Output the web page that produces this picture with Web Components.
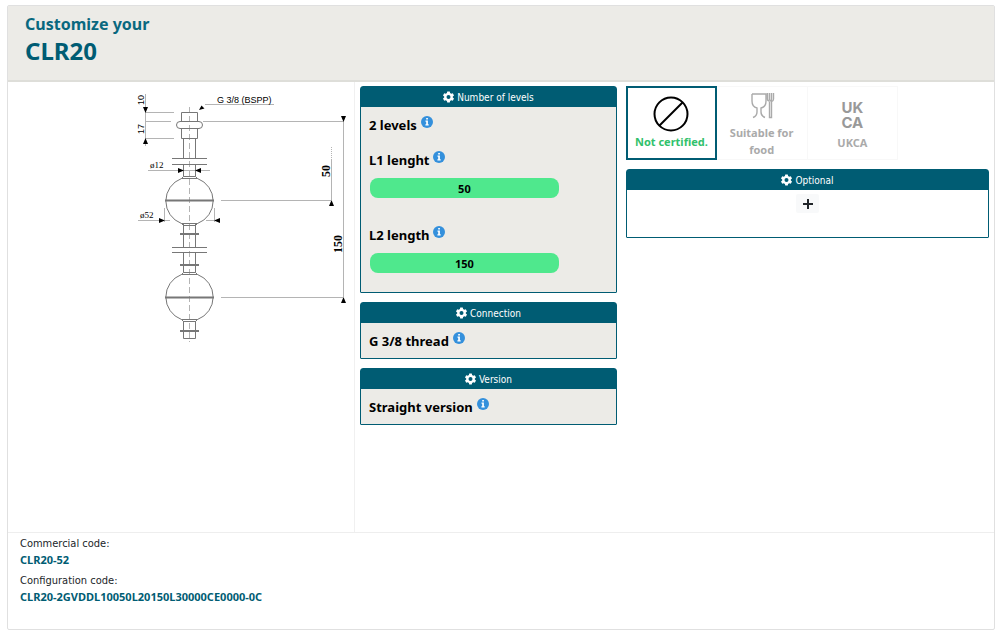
<!DOCTYPE html>
<html lang="en">
<head>
<meta charset="utf-8">
<title>Customize your CLR20</title>
<style>
  :root { --teal: #005c73; --panel: #ecebe7; --line: #e0e0e0; --strong: "Noto Sans", "Open Sans", sans-serif; }
  body { margin: 0; padding: 5px 5px 5px 7px; background: #fff; color: #212529; font-family: "DejaVu Sans Condensed", "Noto Sans", sans-serif; font-size: 11px; }
</style>
</head>
<body>
<product-configurator>
  <product-header slot="header" name="CLR20">Customize your</product-header>
  <float-drawing slot="drawing"></float-drawing>
  <option-panel slot="options" heading="Number of levels">
    <option-row label="2 levels"></option-row>
    <option-row label="L1 lenght" value="50"></option-row>
    <option-row label="L2 length" value="150"></option-row>
  </option-panel>
  <option-panel slot="options" heading="Connection"><option-row label="G 3/8 thread"></option-row></option-panel>
  <option-panel slot="options" heading="Version"><option-row label="Straight version"></option-row></option-panel>
  <cert-picker slot="extras">
    <cert-choice selected label="Not certified.">
      <svg width="36" height="36" viewBox="0 0 36 36" fill="none" stroke="#000" stroke-width="2" aria-hidden="true"><circle cx="18" cy="18" r="16.5"/><path d="M6.5 29.5 29.5 6.5"/></svg>
    </cert-choice>
    <cert-choice label="Suitable for food">
      <svg width="26" height="28" viewBox="0 0 26 28" fill="none" stroke="#aaa" stroke-width="1.4" aria-hidden="true"><path d="M3 2h14v7q0 6-5 7v4q0 4 4 5.500M3 2v7q0 6 5 7v4q0 4-4 5.500M18.500 1v6q0 2 2 2t2-2V1M20.500 1v7M24.500 1v6q0 2-2 2.500v16h-2V10"/></svg>
    </cert-choice>
    <cert-choice label="UKCA">
      <span class="mark" aria-hidden="true"><span>UK</span><span>CA</span></span>
    </cert-choice>
  </cert-picker>
  <option-panel slot="extras" heading="Optional" plain><add-option></add-option></option-panel>
  <code-summary slot="footer" commercial="CLR20-52" configuration="CLR20-2GVDDL10050L20150L30000CE0000-0C"></code-summary>
</product-configurator>

<script>
class BaseElement extends HTMLElement {
  connectedCallback() {
    if (this.shadowRoot) return;
    this.attachShadow({ mode: "open" }).innerHTML = this.render();
  }
}

customElements.define("product-configurator", class extends BaseElement {
  render() {
    return `<style>
      :host { display: block; border: 1px solid var(--line); border-radius: 2px; }
      main { display: grid; grid-template-columns: 347fr 266fr 373fr; min-height: 450px; border-bottom: 1px solid #eee; }
      .drawing { border-right: 1px solid #f0f0f0; padding: 8px 4px 0 0; display: flex; justify-content: flex-end; }
      .stack { display: flex; flex-direction: column; gap: 9px; padding: 4px 5px; }
      .options { padding-right: 4px; }
    </style>
    <slot name="header"></slot>
    <main>
      <div class="drawing"><slot name="drawing"></slot></div>
      <div class="stack options"><slot name="options"></slot></div>
      <div class="stack"><slot name="extras"></slot></div>
    </main>
    <slot name="footer"></slot>`;
  }
});

customElements.define("product-header", class extends BaseElement {
  render() {
    return `<style>
      :host { display: block; background: var(--panel); border-bottom: 2px solid #deded9; padding: 6px 17px 14px; color: var(--teal); font-family: var(--strong); }
      p, h1 { margin: 0; font-weight: 700; }
      p { font-size: 16px; line-height: 24px; color: #09687f; }
      h1 { font-size: 24px; line-height: 30px; }
    </style><p><slot></slot></p><h1>${this.getAttribute("name")}</h1>`;
  }
});

customElements.define("option-panel", class extends BaseElement {
  render() {
    return `<style>
      :host { display: block; border: 1px solid var(--teal); border-radius: 3px 3px 1px 1px; background: var(--panel); }
      :host([plain]) { background: #fff; min-height: 67px; }
      h2 { margin: 0; display: flex; align-items: center; justify-content: center; gap: 3px; height: 20px; background: var(--teal); color: #fff; font-size: 10px; font-weight: 400; }
    </style>
    <h2><svg width="11" height="12" viewBox="0 0 22 24" fill="#fff" fill-rule="evenodd" aria-hidden="true"><path d="M8.500 1h5l.7 3.200 2.300 1.300L19.600 4.500l2.400 4.300-2.400 2.200v2l2.400 2.200-2.400 4.300-3.100-1-2.300 1.300-.7 3.200h-5l-.7-3.200-2.300-1.300-3.100 1L0 15.200 2.400 13v-2L0 8.800 2.400 4.500l3.100 1 2.300-1.300ZM11 8a4 4 0 1 0 0 8 4 4 0 0 0 0-8Z"/></svg>${this.getAttribute("heading")}</h2><slot></slot>`;
  }
});

customElements.define("option-row", class extends BaseElement {
  render() {
    const value = this.getAttribute("value"), label = this.getAttribute("label");
    const tag = value === null ? "span" : "label";
    return `<style>
      :host { display: block; padding: 0 8px; color: #000; font-family: var(--strong); }
      :host([value]) { padding-bottom: 19px; }
      .head { display: flex; align-items: center; gap: 4px; height: 35px; font-size: 13px; font-weight: 700; }
      :host([value]) .head { height: 36px; }
      button { border: 0; padding: 0; margin-bottom: 6px; background: none; display: flex; }
      input { display: block; box-sizing: border-box; width: 79%; height: 20px; margin-left: 1px; padding: 0; border: 0; border-radius: 8px; background: #4fe88d; color: #000; text-align: center; font: inherit; font-size: 11px; font-weight: 700; }
    </style>
    <div class="head"><${tag}${value === null ? "" : ' for="v"'}>${label}</${tag}>
      <button type="button" aria-label="About ${label}"><svg width="12" height="12" viewBox="0 0 12 12"><circle cx="6" cy="6" r="6" fill="#3490dc"/><path fill="#fff" d="M5.200 2h1.700v1.600H5.200ZM4.500 4.600h2.400v3.600h.8v1.200H4.400V8.200h.8V5.700h-.7Z"/></svg></button>
    </div>${value === null ? "" : `<input id="v" type="text" value="${value}">`}`;
  }
});

customElements.define("cert-picker", class extends BaseElement {
  render() {
    return `<style>:host { display: grid; grid-template-columns: repeat(4, 1fr); grid-auto-rows: 74px; }</style><slot></slot>`;
  }
});

customElements.define("cert-choice", class extends BaseElement {
  render() {
    return `<style>
      :host { display: flex; }
      button { flex: 1; min-width: 0; padding: 4px 8px 0; border: 1px solid #f8f8f8; border-left-width: 0; background: #fff; display: flex; flex-direction: column; align-items: center; justify-content: center; gap: 4px; font: 700 11px/17px var(--strong); color: #aaa; }
      :host([selected]) button { border: 2px solid var(--teal); padding: 0; gap: 1px; color: #31c16c; }
      ::slotted(svg) { flex: none; }
      ::slotted(.mark) { display: grid; font: 700 15px/15px Inter, sans-serif; color: #999; }
    </style><button type="button" aria-pressed="${this.hasAttribute("selected")}"><slot></slot><span>${this.getAttribute("label")}</span></button>`;
  }
});

customElements.define("add-option", class extends BaseElement {
  render() {
    return `<style>
      :host { display: flex; justify-content: center; padding-top: 4px; }
      button { width: 23px; height: 19px; padding: 0; border: 0; border-radius: 2px; background: #f8f9fa; display: grid; place-items: center; }
    </style><button type="button" aria-label="Add option"><svg width="10" height="10" viewBox="0 0 10 10" stroke="#212529" stroke-width="2"><path d="M5 0v10M0 5h10"/></svg></button>`;
  }
});

customElements.define("code-summary", class extends BaseElement {
  render() {
    return `<style>
      :host { display: block; padding: 2px 12px 24px; }
      dl { margin: 0; font-size: 11px; }
      dt { line-height: 17px; }
      dd { margin: 0 0 4px; line-height: 16px; font-family: var(--strong); font-weight: 700; color: var(--teal); }
      dd:last-child { margin: 0; }
    </style><dl><dt>Commercial code:</dt><dd>${this.getAttribute("commercial")}</dd><dt>Configuration code:</dt><dd>${this.getAttribute("configuration")}</dd></dl>`;
  }
});

customElements.define("float-drawing", class extends BaseElement {
  render() {
    return `<style>:host { display: block; } svg { display: block; }</style>
    <svg width="220" height="255" viewBox="130 90 220 255" fill="none" stroke="#777" stroke-width="1" role="img" aria-label="Dimensions of the float switch">
      <g stroke="#b4b4b4">
        <path d="M145.500 94v52M146 112.500h28M146 121.500h25M146 138.500h28M205 104.500h69M203 121.500h141M343.500 121v176M221 200.500h110M331.500 160v40M221 297.500h122M148 170.500h62M138 220.500h32M206 220.500h14M164.500 208v14M214.500 208v14"/>
        <path d="M331.500 147v13" stroke-dasharray="1 1"/>
        <path d="M189.500 107v235" stroke-dasharray="6 3"/>
      </g>
      <path d="M181.500 112.500h16v9h-16ZM181.500 129v9.500h16V129M183.500 138.500v20M195.500 138.500v20M172 158.500h35M172 164.500h35M183.500 164.500v12M195.500 164.500v12M183.500 224v23M195.500 224v23M172 247.500h35M172 252.500h35M183.500 252.500v20M195.500 252.500v20M183.500 321v17.500h12V321"/>
      <rect x="176.500" y="121.500" width="26" height="7" rx="3.500"/>
      <path d="M181.500 178.500l2-2h12l2 2ZM181.500 223.500l2 2h12l2-2ZM181.500 274.500l2-2h12l2 2ZM181.500 319.500l2 2h12l2-2Z"/>
      <path d="M181.500 178.500a24 24 0 0 0 0 45M197.500 178.500a24 24 0 0 1 0 45M181.500 274.500a24 24 0 0 0 0 45M197.500 274.500a24 24 0 0 1 0 45"/>
      <path d="M165 200.500h49M165 297.500h49M180 234h19M180 265h19M180 331h19" stroke-width="2"/>
      <g fill="#000" stroke="none">
        <path d="M143 107h5l-2.500 6ZM143 144h5l-2.500-6ZM199 110l2.500-4.500 3 3ZM178 168v5l6-2.500ZM201 168v5l-6-2.500ZM159 218v5l6-2.500ZM220 218v5l-6-2.500ZM341 116h5l-2.500 6ZM329 206h5l-2.500-6ZM341 303h5l-2.500-6Z"/>
        <g font-family="Liberation Sans, sans-serif" font-size="9"><text x="217" y="103">G 3/8 (BSPP)</text><text transform="translate(144 105) rotate(-90)">10</text><text transform="translate(144 134) rotate(-90)">17</text></g>
        <g font-family="Liberation Serif, serif" font-size="9"><text x="150" y="168">ø12</text><text x="140" y="218">ø52</text></g>
        <g font-family="Liberation Serif, serif" font-size="12" font-weight="700"><text transform="translate(330 177) rotate(-90)">50</text><text transform="translate(342 253) rotate(-90)">150</text></g>
      </g>
    </svg>`;
  }
});
</script>
</body>
</html>
